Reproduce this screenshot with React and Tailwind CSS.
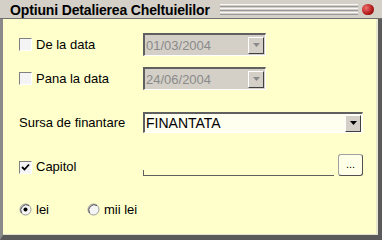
import React from "react";

const font = { fontFamily: '"Liberation Sans", Arial, sans-serif' };

function Check({ checked }) {
  return (
    <div className="w-[13px] h-[13px] border-t border-l border-[#808080] border-r border-b border-r-white border-b-white bg-[#f4f4f4] flex items-center justify-center">
      {checked && (
        <svg width="9" height="9" viewBox="0 0 9 9">
          <path d="M1 4 L3.5 6.5 L8 1.5" stroke="#000" strokeWidth="1.8" fill="none" />
        </svg>
      )}
    </div>
  );
}

function Radio({ on }) {
  return (
    <svg width="13" height="13" viewBox="0 0 13 13">
      <circle cx="6.5" cy="6.5" r="5.5" fill="#f4f4f4" stroke="#9a9a9a" />
      <path d="M2.5 10 A5.5 5.5 0 0 1 10 2.5" stroke="#505050" fill="none" />
      {on && <circle cx="6.5" cy="6.5" r="2" fill="#000" />}
    </svg>
  );
}

function ArrowBtn({ disabled }) {
  return (
    <div className="w-[16px] h-full bg-[#d4d0c8] border-t border-l border-white border-r border-b border-r-[#404040] border-b-[#404040] flex items-center justify-center">
      <svg width="7" height="4" viewBox="0 0 7 4">
        <path d="M0 0 H7 L3.5 4 Z" fill={disabled ? "#8a8a8a" : "#000"} />
      </svg>
    </div>
  );
}

function DateCombo({ value }) {
  return (
    <div className="w-[123px] h-[23px] border-t-2 border-l-2 border-[#606060] border-r border-b border-r-white border-b-white bg-[#d4d0c8] flex items-center">
      <span className="flex-1 pl-[1px] text-[13px] text-[#8a8a8a] leading-none">{value}</span>
      <div className="h-[19px] py-[1px] pr-[1px]">
        <ArrowBtn disabled />
      </div>
    </div>
  );
}

export default function App() {
  return (
    <div className="w-[382px] h-[240px] bg-[#d4d0c8] flex flex-col" style={font}>
      <div className="h-[19px] flex items-center pl-[10px] pr-[8px] border-b border-[#707070]">
        <span className="font-bold text-[14px] tracking-[-0.15px] text-black leading-none whitespace-nowrap pt-[1px]">
          Optiuni Detalierea Cheltuielilor
        </span>
        <div className="flex-1 ml-[10px] mr-[4px] flex flex-col gap-[1px]">
          <div className="h-[1px] bg-[#f8f8f8]" />
          <div className="h-[1px] bg-[#9a9a9a]" />
          <div className="h-[1px] bg-[#f8f8f8]" />
          <div className="h-[1px] bg-[#9a9a9a]" />
          <div className="h-[1px] bg-[#f8f8f8]" />
          <div className="h-[1px] bg-[#9a9a9a]" />
        </div>
        <div className="w-[12px] h-[11px] rounded-full bg-[radial-gradient(circle_at_35%_35%,#f07070,#b01818_60%,#701010)]" />
      </div>
      <div className="flex-1 flex border-l-[3px] border-l-[#8a8a8a] border-r-[4px] border-r-[#5a5a5a] border-b-[5px] border-b-[#5a5a5a]">
        <div className="flex-1 bg-[#ffffcc] border-r-2 border-r-[#e8e8d0] border-b border-b-[#e0e0d0] pt-[14px] pl-[16px] flex flex-col text-[13px] text-black">
          <div className="flex items-center h-[23px]">
            <div className="w-[124px] flex items-center gap-[4px]">
              <Check />
              <span>De la data</span>
            </div>
            <DateCombo value="01/03/2004" />
          </div>
          <div className="flex items-center h-[23px] mt-[11px]">
            <div className="w-[124px] flex items-center gap-[4px]">
              <Check />
              <span>Pana la data</span>
            </div>
            <DateCombo value="24/06/2004" />
          </div>
          <div className="flex items-center h-[21px] mt-[22px]">
            <div className="w-[124px]">Sursa de finantare</div>
            <div className="w-[220px] h-[21px] border-t-2 border-l-2 border-[#606060] border-r border-b border-r-white border-b-white bg-[#fffff0] flex items-center">
              <span className="flex-1 pl-[1px] text-[14px] leading-none">FINANTATA</span>
              <div className="h-[17px] pr-[1px]">
                <ArrowBtn />
              </div>
            </div>
          </div>
          <div className="flex h-[22px] mt-[21px]">
            <div className="w-[124px] flex items-center gap-[4px] pt-[4px]">
              <Check checked />
              <span>Capitol</span>
            </div>
            <div className="w-[191px] h-[6px] self-end border-l border-b border-[#606060]" />
            <div className="ml-[4px] w-[25px] h-[22px] rounded-[3px] border border-[#a0a0a0] border-r-[#505050] border-b-[#505050] bg-[#ffffe8] flex items-end justify-center pb-[5px] text-[11px] leading-none">
              ...
            </div>
          </div>
          <div className="flex items-center h-[13px] mt-[27px]">
            <div className="w-[68px] flex items-center gap-[4px]">
              <Radio on />
              <span>lei</span>
            </div>
            <div className="flex items-center gap-[4px]">
              <Radio />
              <span>mii lei</span>
            </div>
          </div>
        </div>
      </div>
    </div>
  );
}
